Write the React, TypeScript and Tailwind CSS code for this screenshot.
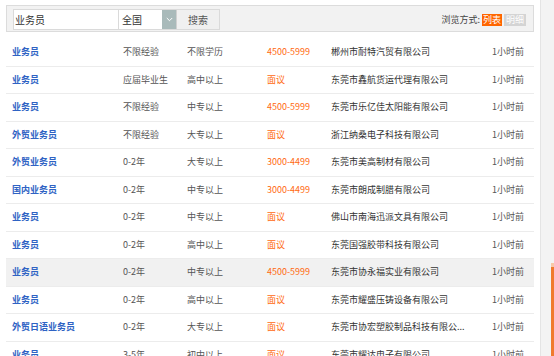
import React from "react";

type Row = {
  title: string;
  exp: string;
  edu: string;
  salary: string;
  company: string;
  hl?: boolean;
};

const rows: Row[] = [
  { title: "业务员", exp: "不限经验", edu: "不限学历", salary: "4500-5999", company: "郴州市耐特汽贸有限公司" },
  { title: "业务员", exp: "应届毕业生", edu: "高中以上", salary: "面议", company: "东莞市鑫航货运代理有限公司" },
  { title: "业务员", exp: "不限经验", edu: "中专以上", salary: "4500-5999", company: "东莞市乐亿佳太阳能有限公司" },
  { title: "外贸业务员", exp: "不限经验", edu: "大专以上", salary: "面议", company: "浙江纳桑电子科技有限公司" },
  { title: "外贸业务员", exp: "0-2年", edu: "大专以上", salary: "3000-4499", company: "东莞市美高制材有限公司" },
  { title: "国内业务员", exp: "0-2年", edu: "中专以上", salary: "3000-4499", company: "东莞市朗成制腊有限公司" },
  { title: "业务员", exp: "0-2年", edu: "中专以上", salary: "面议", company: "佛山市南海迅派文具有限公司" },
  { title: "业务员", exp: "0-2年", edu: "高中以上", salary: "面议", company: "东莞国强胶带科技有限公司" },
  { title: "业务员", exp: "0-2年", edu: "中专以上", salary: "4500-5999", company: "东莞市协永福实业有限公司", hl: true },
  { title: "业务员", exp: "0-2年", edu: "高中以上", salary: "面议", company: "东莞市耀盛压铸设备有限公司" },
  { title: "外贸日语业务员", exp: "0-2年", edu: "大专以上", salary: "面议", company: "东莞市协宏塑胶制品科技有限公..." },
  { title: "业务员", exp: "3-5年", edu: "初中以上", salary: "面议", company: "东莞市耀达电子有限公司" },
];

const font = "font-['Microsoft_YaHei','Noto_Sans_CJK_SC',sans-serif]";

export default function App() {
  return (
    <div className={`w-[554px] h-[356px] overflow-hidden bg-white flex ${font} text-[9px] leading-[12px]`}>
      <div className="w-[540px] shrink-0 px-[6px] pt-[5px]">
        {/* Search bar */}
        <div className="h-[27px] border border-[#dcdcdc] bg-[#f2f2f2] flex items-center pl-[6px] pr-[7px]">
          <div className="h-[21px] mt-[2px] flex items-stretch border border-[#dadada]">
            <div className="w-[104px] bg-white flex items-center pl-[1px] text-[#333] text-[10px]">业务员</div>
            <div className="w-[58px] bg-white border-l border-[#dadada] flex items-center justify-between">
              <span className="pl-[3px] text-[#333] text-[10px]">全国</span>
              <span className="w-[14px] h-full bg-[#a9baba] flex items-center justify-center">
                <svg width="7" height="5" viewBox="0 0 7 5">
                  <path d="M0.8 1 L3.5 3.7 L6.2 1" stroke="#ffffff" strokeWidth="1" fill="none" />
                </svg>
              </span>
            </div>
            <div className="w-[43px] bg-[#f0f0f0] border-l border-[#d0d0d0] flex items-center justify-center text-[#555] text-[10px]">
              搜索
            </div>
          </div>
          <div className="ml-auto flex items-center mt-[2px]">
            <span className="text-[#444] mr-[2px]">浏览方式:</span>
            <span className="w-[20px] h-[12px] bg-[#ff6600] text-white flex items-center justify-center">列表</span>
            <span className="w-[22px] h-[12px] ml-[2px] bg-[#d4d4d4] text-white flex items-center justify-center">明细</span>
          </div>
        </div>

        {/* List */}
        <div className="mt-[7px]">
          {rows.map((r, i) => (
            <div
              key={i}
              className={`h-[27.5px] border-b border-[#ececec] flex items-center pl-[6px] ${r.hl ? "bg-[#f1f1f1]" : ""}`}
            >
              <span className="w-[111px] shrink-0 font-bold text-[#2f63c4]">{r.title}</span>
              <span className="w-[64px] shrink-0 text-[#555]">{r.exp}</span>
              <span className="w-[80px] shrink-0 text-[#555]">{r.edu}</span>
              <span className="w-[64px] shrink-0 text-[#ff6a10]">{r.salary}</span>
              <span className="w-[161px] shrink-0 text-[#333] whitespace-nowrap">{r.company}</span>
              <span className="text-[#555]">1小时前</span>
            </div>
          ))}
        </div>
      </div>
      <div className="flex-1 h-full border-l border-[#e4e4e4] bg-[#f3f3f3] flex flex-col">
        <div className="h-[263px]" />
        <div className="ml-auto w-[3px] flex-1 flex flex-col">
          <div className="h-[4px] bg-[#f8c9a8]" />
          <div className="flex-1 bg-[#f07a2e]" />
        </div>
      </div>
    </div>
  );
}
